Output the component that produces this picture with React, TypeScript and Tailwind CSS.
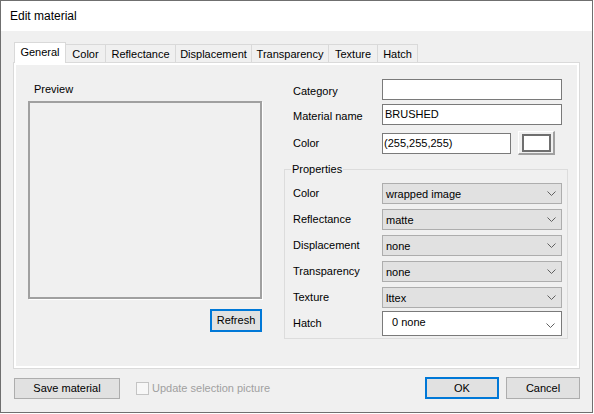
import React from "react";

const tabs = [
  { name: "General", w: "w-[52px]" },
  { name: "Color", w: "w-[41px]" },
  { name: "Reflectance", w: "w-[71px]" },
  { name: "Displacement", w: "w-[77px]" },
  { name: "Transparency", w: "w-[78px]" },
  { name: "Texture", w: "w-[50px]" },
  { name: "Hatch", w: "w-[41px]" },
];

const props = [
  { label: "Color", value: "wrapped image" },
  { label: "Reflectance", value: "matte" },
  { label: "Displacement", value: "none" },
  { label: "Transparency", value: "none" },
  { label: "Texture", value: "lttex" },
];

const Chevron = () => (
  <svg width="9" height="5" viewBox="0 0 9 5" className="shrink-0">
    <path d="M0.5 0.5 L4.5 4.5 L8.5 0.5" fill="none" stroke="#606060" strokeWidth="1" />
  </svg>
);

const Combo: React.FC<{ value: string }> = ({ value }) => (
  <div className="w-[180px] h-[21px] bg-[#e1e1e1] border border-[#adadad] flex items-center pl-[3px] pr-[5px]">
    <span className="flex-1 pt-[1px]">{value}</span>
    <Chevron />
  </div>
);

export default function App() {
  return (
    <div className="w-[594px] h-[414px] bg-white">
      <div className="w-[593px] h-[413px] border border-[#6f6f6f] bg-[#f0f0f0] flex flex-col text-[11px] leading-[13px] text-black font-['Liberation_Sans',Arial,sans-serif]">
        <div className="h-[30px] bg-white flex items-center pl-[9px] text-[12px]">Edit material</div>

        <div className="flex-1 px-[12px] pt-[11px]">
          {/* tab strip */}
          <div className="flex items-end h-[20px] pl-[1px]">
            {tabs.map((t, i) =>
              i === 0 ? (
                <div
                  key={t.name}
                  className={`${t.w} h-[21px] -mb-px relative z-10 bg-white border border-b-0 border-[#d9d9d9] flex items-center justify-center pb-[1px]`}
                >
                  {t.name}
                </div>
              ) : (
                <div
                  key={t.name}
                  className={`${t.w} h-[18px] -ml-px border border-b-0 border-[#d9d9d9] flex items-center justify-center pt-[1px]`}
                >
                  {t.name}
                </div>
              )
            )}
          </div>

          {/* tab page */}
          <div className="w-[567px] h-[307px] border border-[#dadada]">
            <div className="h-full border-2 border-white flex">
              <div className="w-[246px] pl-[12px] flex flex-col">
                <div className="mt-[18px] pl-[6px]">Preview</div>
                <div className="mt-[5px] h-[198px] border-2 border-[#a0a0a0] shadow-[1px_1px_0_0_#ffffff]" />
                <button className="mt-[10px] self-end w-[52px] h-[23px] bg-[#e1e1e1] border-2 border-[#0078d7] flex items-center justify-center">
                  Refresh
                </button>
              </div>

              <div className="ml-[22px] w-[284px] pt-[14px] flex flex-col">
                <div className="flex items-center h-[21px]">
                  <div className="w-[98px] pl-[9px] pt-[4px]">Category</div>
                  <div className="w-[180px] h-[21px] bg-white border border-[#7a7a7a]" />
                </div>
                <div className="flex items-center h-[21px] mt-[4px]">
                  <div className="w-[98px] pl-[9px] pt-[4px]">Material name</div>
                  <div className="w-[180px] h-[21px] bg-white border border-[#7a7a7a] flex items-center pl-[2px]">
                    BRUSHED
                  </div>
                </div>
                <div className="flex items-center h-[24px] mt-[6px]">
                  <div className="w-[98px] pl-[9px]">Color</div>
                  <div className="w-[129px] h-[21px] bg-white border border-[#7a7a7a] flex items-center pl-[1px]">
                    (255,255,255)
                  </div>
                  <div className="ml-[7px] w-[37px] h-[24px] border-t border-l border-white border-r-2 border-b-2 border-r-[#a0a0a0] border-b-[#a0a0a0] pl-[3px] pt-[2px]">
                    <div className="w-[29px] h-[18px] border-2 border-[#6f6f6f] bg-white" />
                  </div>
                </div>

                <fieldset className="mt-[8px] w-[284px] border border-[#dcdcdc] pl-0 pb-[2px]">
                  <legend className="ml-[6px] px-[1px]">Properties</legend>
                  <div className="flex flex-col pt-[7px]">
                    {props.map((p, i) => (
                      <div key={p.label} className={`flex items-center h-[21px] ${i > 0 ? "mt-[5px]" : ""}`}>
                        <div className="w-[97px] pl-[8px]">{p.label}</div>
                        <Combo value={p.value} />
                      </div>
                    ))}
                    <div className="flex items-center h-[25px] mt-[3px]">
                      <div className="w-[97px] pl-[8px]">Hatch</div>
                      <div className="w-[180px] h-[25px] bg-white border border-[#7a7a7a] flex pl-[9px] pr-[6px]">
                        <span className="flex-1 self-center pb-[2px]">0 none</span>
                        <div className="self-end pb-[7px]">
                          <Chevron />
                        </div>
                      </div>
                    </div>
                  </div>
                </fieldset>
              </div>
            </div>
          </div>

          {/* bottom buttons */}
          <div className="mt-[8px] flex items-center h-[22px]">
            <button className="ml-[1px] w-[106px] h-[21px] bg-[#e1e1e1] border border-[#adadad] flex items-center justify-center">
              Save material
            </button>
            <div className="ml-[16px] w-[13px] h-[13px] border border-[#c4c4c4] bg-[#f7f7f7]" />
            <span className="ml-[3px] text-[#a0a0a0]">Update selection picture</span>
            <button className="ml-auto w-[74px] h-[22px] bg-[#e1e1e1] border-2 border-[#0078d7] flex items-center justify-center">
              OK
            </button>
            <button className="ml-[7px] w-[74px] h-[22px] bg-[#e1e1e1] border border-[#adadad] flex items-center justify-center">
              Cancel
            </button>
          </div>
        </div>
      </div>
    </div>
  );
}
